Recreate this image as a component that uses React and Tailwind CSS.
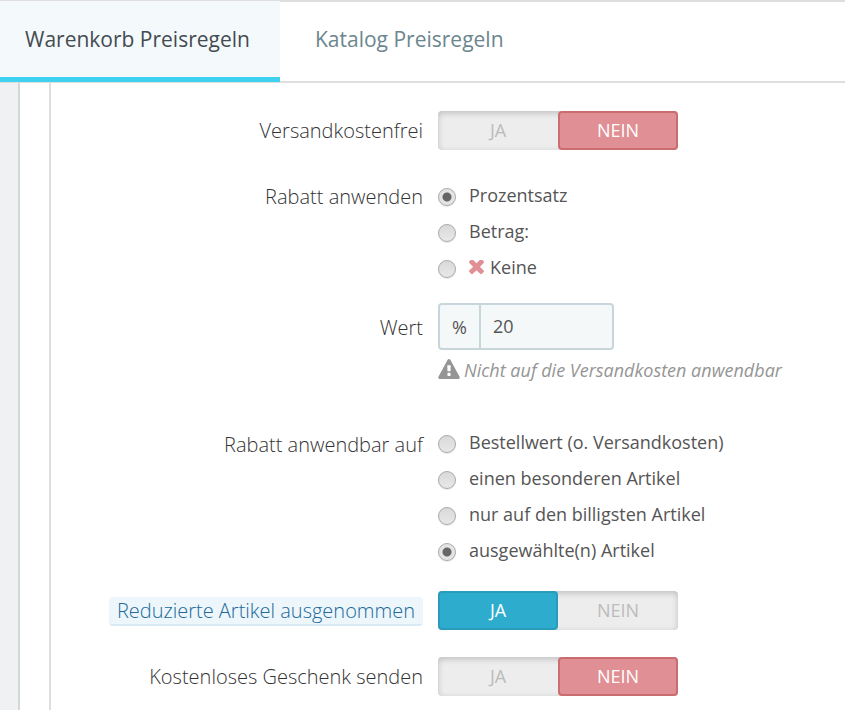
import { useState } from "react";

function TimesIcon() {
  return (
    <svg viewBox="302 430 1188 1188" className="h-[15px] w-[15px] text-[#e08f95]" fill="currentColor" aria-hidden="true">
      <path transform="translate(0 64)" d="M1490 1258q0 40-28 68l-136 136q-28 28-68 28t-68-28l-294-294-294 294q-28 28-68 28t-68-28l-136-136q-28-28-28-68t28-68l294-294-294-294q-28-28-28-68t28-68l136-136q28-28 68-28t68 28l294 294 294-294q28-28 68-28t68 28l136 136q28 28 28 68t-28 68l-294 294 294 294q28 28 28 68z" />
    </svg>
  );
}

function WarningIcon() {
  return (
    <svg viewBox="0 0 1792 1664" className="mb-0.5 h-5 w-[22px] shrink-0" fill="currentColor" aria-hidden="true">
      <path d="M1024 1375v-190q0-14-9.5-23.5t-22.5-9.5h-192q-13 0-22.5 9.5t-9.5 23.5v190q0 14 9.5 23.5t22.5 9.5h192q13 0 22.5-9.5t9.5-23.5zm-2-374l18-459q0-12-10-19-13-11-24-11h-220q-11 0-24 11-10 7-10 21l17 457q0 10 10 16.5t24 6.5h185q14 0 23.5-6.5t10.5-16.5zm-14-934l768 1408q35 63-2 126-17 29-46.5 46t-63.5 17h-1536q-34 0-63.5-17t-46.5-46q-37-63-2-126l768-1408q17-31 47-49t65-18 65 18 47 49z" />
    </svg>
  );
}

function Row({ id, htmlFor, label, className = "", labelClass = "h-10", children }) {
  const Label = htmlFor ? "label" : "span";
  return (
    <div className={`grid grid-cols-[372px_1fr] gap-x-[15px] ${className}`}>
      <div className={`flex items-center justify-end text-xl font-light text-[#333] ${labelClass}`}>
        <Label id={id} htmlFor={htmlFor}>{label}</Label>
      </div>
      <div>{children}</div>
    </div>
  );
}

const switchSide = "flex flex-1 cursor-pointer items-center justify-center rounded border-2 pb-0.5 text-lg has-focus-visible:outline-2";
const switchOff = "border-transparent text-[#bbb]";

function Switch({ name, labelledBy, initial }) {
  const [on, setOn] = useState(initial);
  return (
    <div role="radiogroup" aria-labelledby={labelledBy} className="relative flex h-[39px] w-60 rounded bg-[#ededed] shadow-[inset_0_2px_6px_rgba(0,0,0,0.2)]">
      <label className={`${switchSide} ${on ? "border-[#2a9cbb] bg-[#2eacce] text-white" : switchOff}`}>
        <input type="radio" name={name} className="sr-only" checked={on} onChange={() => setOn(true)} />
        JA
      </label>
      <label className={`${switchSide} ${on ? switchOff : "border-[#c96d71] bg-[#e08f95] text-white"}`}>
        <input type="radio" name={name} className="sr-only" checked={!on} onChange={() => setOn(false)} />
        NEIN
      </label>
    </div>
  );
}

function RadioList({ name, labelledBy, initial, options }) {
  return (
    <div role="radiogroup" aria-labelledby={labelledBy}>
      {options.map((option) => (
        <label key={option.text} className="flex h-9 items-center gap-[13px] text-lg text-[#555]">
          <input
            type="radio"
            name={name}
            defaultChecked={option.text === initial}
            className="mt-0.5 h-[18px] w-[18px] shrink-0 appearance-none rounded-full border border-[#aaa] bg-linear-to-b from-[#d9d9d9] to-[#e8e8e8] shadow-[0_1px_1px_rgba(0,0,0,0.1)] checked:bg-[radial-gradient(circle,#666_4px,#e4e4e4_5px)]"
          />
          <span className="flex items-center gap-1.5 pb-0.5">
            {option.icon}
            {option.text}
          </span>
        </label>
      ))}
    </div>
  );
}

export default function App() {
  return (
    <div className="flex min-h-screen flex-col bg-white font-['Open_Sans',sans-serif]">
      <nav className="flex h-[83px] border-b border-[#dedede] text-[21px]">
        <a href="#warenkorb" aria-current="page" className="flex items-center border-t border-b-5 border-t-[#dedede] border-b-[#3ed2f0] bg-[#f4f9fc] px-[25px] pt-0.5 text-[#444b51]">
          <span className="w-[230px]">Warenkorb Preisregeln</span>
        </a>
        <div className="flex flex-1 border-t-2 border-b border-[#dedede]">
          <a href="#katalog" className="flex items-center px-[35px] pb-1 text-[#6c868e]">
            Katalog Preisregeln
          </a>
        </div>
      </nav>
      <main className="flex flex-1 bg-[#eff1f2] pl-[18px]">
        <div className="flex flex-1 border-l-2 border-[#d3d8db] bg-white pl-[29px]">
          <form className="flex-1 border-l-2 border-[#dedede] pt-7 pb-3">
            <Row id="versand" label="Versandkostenfrei">
              <Switch name="versand" labelledBy="versand" initial={false} />
            </Row>
            <Row id="rabatt" label="Rabatt anwenden" className="mt-[27px]" labelClass="h-[38px]">
              <RadioList
                name="rabatt"
                labelledBy="rabatt"
                initial="Prozentsatz"
                options={[{ text: "Prozentsatz" }, { text: "Betrag:" }, { text: "Keine", icon: <TimesIcon /> }]}
              />
            </Row>
            <Row htmlFor="wert" label="Wert" className="mt-[17px]" labelClass="h-[50px]">
              <div className="flex h-[47px] w-44 overflow-hidden rounded border-2 border-[#c7d6db] bg-[#f5f8f9] text-lg text-[#555]">
                <span className="flex w-[41px] items-center justify-center border-r-2 border-[#c7d6db]">%</span>
                <input id="wert" type="text" defaultValue="20" className="min-w-0 flex-1 bg-transparent px-3 pb-0.5" />
              </div>
              <p className="flex h-10 items-center gap-1 text-lg text-[#959595] italic">
                <WarningIcon />
                Nicht auf die Versandkosten anwendbar
              </p>
            </Row>
            <Row id="anwendbar" label="Rabatt anwendbar auf" className="mt-[35px]">
              <RadioList
                name="anwendbar"
                labelledBy="anwendbar"
                initial="ausgewählte(n) Artikel"
                options={[
                  { text: "Bestellwert (o. Versandkosten)" },
                  { text: "einen besonderen Artikel" },
                  { text: "nur auf den billigsten Artikel" },
                  { text: "ausgewählte(n) Artikel" },
                ]}
              />
            </Row>
            <Row
              id="reduziert"
              className="mt-[22px]"
              label={
                <span className="block rounded border-b-2 border-[#d8ebf5] bg-[#ecf6fb] px-2 leading-[27px] text-[#20699a]">
                  Reduzierte Artikel ausgenommen
                </span>
              }
            >
              <Switch name="reduziert" labelledBy="reduziert" initial={true} />
            </Row>
            <Row id="geschenk" label="Kostenloses Geschenk senden" className="mt-[26px]">
              <Switch name="geschenk" labelledBy="geschenk" initial={false} />
            </Row>
          </form>
        </div>
      </main>
    </div>
  );
}
